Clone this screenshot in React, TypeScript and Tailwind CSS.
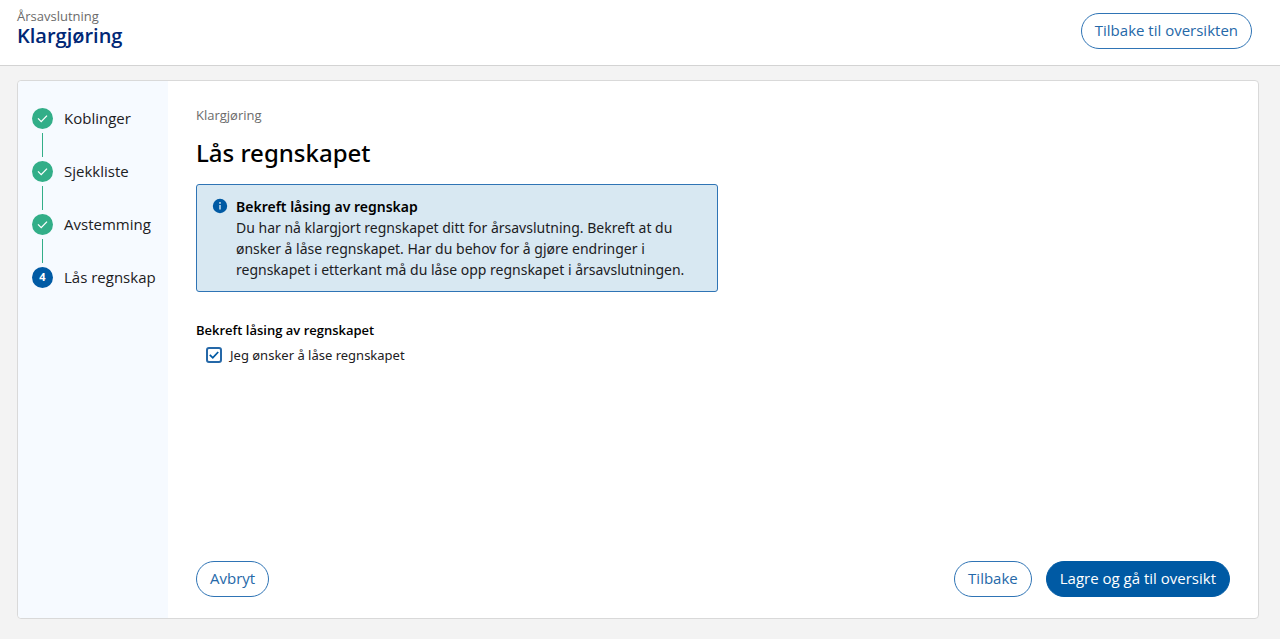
import { useState } from "react";
import type { ButtonHTMLAttributes } from "react";
import clsx from "clsx";

const steps = [
  { label: "Koblinger", done: true },
  { label: "Sjekkliste", done: true },
  { label: "Avstemming", done: true },
  { label: "Lås regnskap", done: false },
];

type ButtonProps = ButtonHTMLAttributes<HTMLButtonElement> & { primary?: boolean };

function Button({ primary, children, ...rest }: ButtonProps) {
  return (
    <button
      type="button"
      className={clsx(
        "h-9 rounded-full border px-[13px] pb-0.5 text-[15px] whitespace-nowrap cursor-pointer",
        primary ? "border-[#005aa4] bg-[#005aa4] text-white" : "border-[#2f74b5] bg-white text-[#2568a8]"
      )}
      {...rest}
    >
      {children}
    </button>
  );
}

function Header() {
  return (
    <header className="flex items-start justify-between border-b border-[#d3d3d3] bg-white pt-2 pr-7 pb-3.5 pl-[17px]">
      <div>
        <p className="text-[13px] leading-4 text-[#6b6b6b]">Årsavslutning</p>
        <h1 className="text-xl leading-6 font-semibold text-[#002776]">Klargjøring</h1>
      </div>
      <div className="pt-[5px] pb-0.5">
        <Button>Tilbake til oversikten</Button>
      </div>
    </header>
  );
}

function Stepper() {
  return (
    <nav aria-label="Steg" className="w-[150px] shrink-0 rounded-l bg-[#f6faff] pt-[27px] pl-3.5">
      <ol>
        {steps.map((step, i) => (
          <li key={step.label}>
            <div className="flex h-[21px] items-center gap-[11px]">
              <span
                className={clsx(
                  "flex size-[21px] shrink-0 items-center justify-center rounded-full text-[11px] font-bold text-white",
                  step.done ? "bg-[#32ae88]" : "bg-[#005aa4]"
                )}
              >
                {step.done ? (
                  <svg viewBox="0 0 21 21" className="size-[21px]" fill="none" stroke="currentColor" strokeWidth="1.3">
                    <path d="M6 10.4 9.2 13.6 15 7.6" />
                  </svg>
                ) : (
                  i + 1
                )}
              </span>
              <span className="text-[15px] whitespace-nowrap text-[#1c2023]">{step.label}</span>
            </div>
            {i < steps.length - 1 && <div className="my-1 ml-2.5 h-6 w-px bg-[#32ae88]" />}
          </li>
        ))}
      </ol>
    </nav>
  );
}

function InfoBox() {
  return (
    <section className="mt-[17px] flex max-w-[522px] gap-2 rounded-[3px] border border-[#2f74b5] bg-[#d8e8f2] px-[15px] py-[11px] font-['Noto_Sans',sans-serif]">
      <svg viewBox="0 0 16 16" className="mt-0.5 size-4 shrink-0">
        <circle cx="8" cy="8" r="7.2" fill="#005aa4" />
        <circle cx="8" cy="4.9" r="0.9" fill="#d8e8f2" />
        <path d="M8 7v4.6" stroke="#d8e8f2" strokeWidth="1.4" />
      </svg>
      <div className="text-sm leading-[21px] text-[#1c2023]">
        <h3 className="font-semibold text-black">Bekreft låsing av regnskap</h3>
        <p>
          Du har nå klargjort regnskapet ditt for årsavslutning. Bekreft at du ønsker å låse regnskapet. Har du behov
          for å gjøre endringer i regnskapet i etterkant må du låse opp regnskapet i årsavslutningen.
        </p>
      </div>
    </section>
  );
}

export default function App() {
  const [locked, setLocked] = useState(true);

  return (
    <div className="flex min-h-screen flex-col bg-[#f3f3f3] font-['Open_Sans',sans-serif]">
      <Header />
      <main className="mt-3.5 mr-[21px] mb-5 ml-[17px] flex flex-1 rounded border border-[#d9d9d9] bg-white">
        <Stepper />
        <div className="flex flex-1 flex-col px-7 pt-[26px] pb-[21px]">
          <p className="text-[13px] leading-4 text-[#6b6b6b]">Klargjøring</p>
          <h2 className="mt-4 font-['Noto_Sans',sans-serif] text-2xl leading-7 font-medium text-black">
            Lås regnskapet
          </h2>
          <InfoBox />
          <fieldset className="mt-7">
            <legend className="text-[13px] leading-5 font-semibold text-black">Bekreft låsing av regnskapet</legend>
            <label className="mt-[5px] ml-2.5 flex items-center gap-2 font-['Noto_Sans',sans-serif] text-[13px] leading-5 text-[#1c2023]">
              <span className="grid size-4 place-items-center">
                <input
                  type="checkbox"
                  checked={locked}
                  onChange={(e) => setLocked(e.target.checked)}
                  className="col-start-1 row-start-1 size-4 appearance-none rounded-[3px] border-2 border-[#2568a8] bg-white"
                />
                {locked && (
                  <svg
                    viewBox="0 0 16 16"
                    className="pointer-events-none col-start-1 row-start-1 size-4"
                    fill="none"
                    stroke="#005aa4"
                    strokeWidth="1.8"
                  >
                    <path d="M3.8 7.8 6.8 10.8 12.2 5" />
                  </svg>
                )}
              </span>
              Jeg ønsker å låse regnskapet
            </label>
          </fieldset>
          <div className="mt-auto flex justify-between">
            <Button>Avbryt</Button>
            <div className="flex gap-3.5">
              <Button>Tilbake</Button>
              <Button primary>Lagre og gå til oversikt</Button>
            </div>
          </div>
        </div>
      </main>
    </div>
  );
}
